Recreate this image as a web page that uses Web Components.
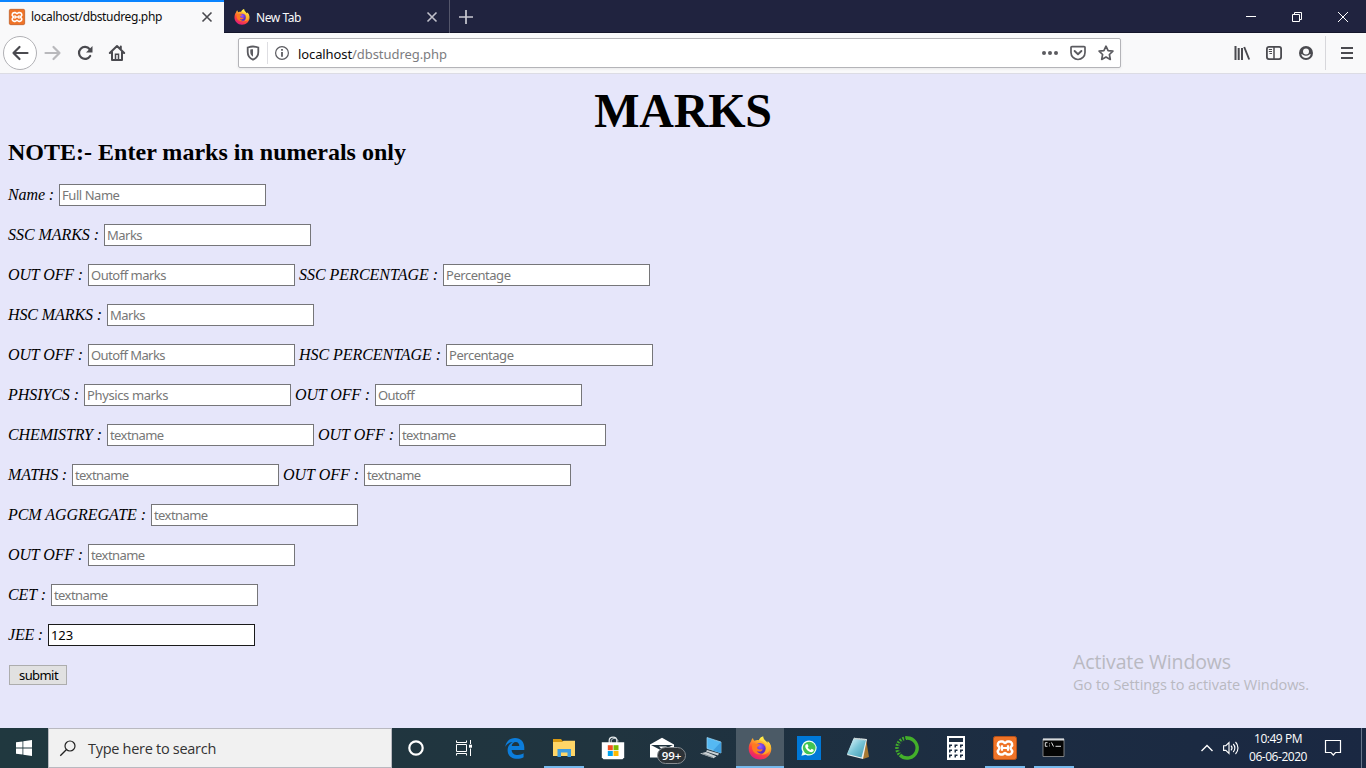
<!DOCTYPE html>
<html lang="en">
<head>
<meta charset="utf-8">
<title>localhost/dbstudreg.php</title>
<style>
html,body{margin:0;height:100%;overflow:hidden}
</style>
</head>
<body>
<desktop-screen></desktop-screen>
<script>
const firefox = `<svg viewBox="0 0 24 24"><defs><linearGradient id="f" x1=".8" y1="0" x2=".25" y2="1"><stop offset="0" stop-color="#fff44f"/><stop offset=".35" stop-color="#ffa828"/><stop offset=".65" stop-color="#ff4838"/><stop offset="1" stop-color="#e01583"/></linearGradient><radialGradient id="p" cx=".5" cy=".3"><stop offset="0" stop-color="#9a5cff"/><stop offset="1" stop-color="#5a2ec4"/></radialGradient><linearGradient id="y" x1="0" y1="0" x2="0" y2="1"><stop offset="0" stop-color="#fff04a"/><stop offset="1" stop-color="#ff9a20"/></linearGradient></defs><path fill="url(#f)" d="M3.200 5c.2-1.400 1-2.500 1.800-3 .1 1.300.7 2.100 1.400 2.800C8 4.100 9.500 4 11 4.200 11.800 2.200 13 1 15.200.5c-.3 2 .8 3.200 2.500 4.500.8.600 1.300 1.300 1.500 2 .5-.4.600-1.200.500-1.800 2.400 2 3.600 4.600 3.600 7.500C23.300 18.900 18.300 23.500 12 23.500S.7 18.800.7 12.700c0-3 .9-5.600 2.500-7.700z"/><path fill="url(#y)" d="M15.200.5c-2.200.5-3.400 1.800-4.200 3.700 4 .4 6.800 3 7.200 6.300.4 4-2 7-5 8.300 5 .1 8.600-2.500 9.400-7 .4-2.500-.8-5-2.900-6.600.1.600 0 1.400-.5 1.800C18 4.500 15 3.500 15.200.5z"/><circle cx="12" cy="12.600" r="5.600" fill="url(#p)"/><path fill="#ff7a20" d="M4 8.200c1.500-1 3.500-.9 4.700-.1 1.300-.2 2.300.3 3.600.5-.3 1.400-2.300 1.700-3 2.300-.3.900.1 1.800 1.200 2.400 1.400.6 2.400-.4 3.600-.1.600.2.500.8 0 1.200-1.500 1.400-3.500 1.500-5.300.6 1.200 2 3.500 3 6 2.600-4.500 2.200-9.600-.1-10.700-5z"/></svg>`;
const xampp = `<svg viewBox="0 0 24 24"><rect x=".5" y=".5" width="23" height="23" rx="2" fill="#ef7327" stroke="#b6521a"/><path d="M7.800 5.500h1.500c1.400 0 1.700 1.500 2.700 1.500s1.300-1.500 2.700-1.500h1.500a3 3 0 0 1 2 5.200c-.9.900-.9 1.700 0 2.600a3 3 0 0 1-2 5.200h-1.500c-1.400 0-1.700-1.500-2.700-1.500s-1.300 1.500-2.700 1.500H7.800a3 3 0 0 1-2-5.200c.9-.9.9-1.700 0-2.600a3 3 0 0 1 2-5.200z" fill="none" stroke="#fff" stroke-width="2.500"/><path d="M9 9.200v5.600M15 9.200v5.600M9 12h6" stroke="#fff" stroke-width="2.200"/></svg>`;
const ICONS = {
firefox, xampp,
close:`<svg viewBox="0 0 12 12"><path d="M1.500 1.500l9 9M10.500 1.500l-9 9" stroke="currentColor" stroke-width="1.600"/></svg>`,
plus:`<svg viewBox="0 0 14 14"><path d="M7 0v14M0 7h14" stroke="currentColor" stroke-width="1.700"/></svg>`,
min:`<svg viewBox="0 0 12 12"><path d="M1 5.500h10" stroke="#fff"/></svg>`,
restore:`<svg viewBox="0 0 12 12"><path d="M1.500 3.500h7v7h-7zM3.500 3.500v-2h7v7h-2" fill="none" stroke="#fff"/></svg>`,
winclose:`<svg viewBox="0 0 12 12"><path d="M1 1l10 10M11 1L1 11" stroke="#fff"/></svg>`,
back:`<svg viewBox="0 0 16 16"><path d="M15.500 8H1.500M7.500 2L1.500 8 7.500 14" fill="none" stroke="currentColor" stroke-width="2.200" stroke-linejoin="round" stroke-linecap="round"/></svg>`,
forward:`<svg viewBox="0 0 16 16"><path d="M.5 8h14M8.500 2L14.500 8 8.500 14" fill="none" stroke="currentColor" stroke-width="2.200" stroke-linejoin="round" stroke-linecap="round"/></svg>`,
reload:`<svg viewBox="0 0 16 16"><path d="M12.700 4.200A6 6 0 1 0 13.200 11" fill="none" stroke="currentColor" stroke-width="2.200" stroke-linecap="round"/><path d="M15.500 1v6.500H9z" fill="currentColor"/></svg>`,
home:`<svg viewBox="0 0 16 16"><path d="M.8 8L8 1l7.200 7M3 7v8h10V7M11.800 1.500v3" fill="none" stroke="currentColor" stroke-width="2" stroke-linecap="round" stroke-linejoin="round"/><path d="M6.500 15V9.300h3V15" stroke="currentColor" fill="none" stroke-width="1.500"/></svg>`,
shield:`<svg viewBox="0 0 16 16"><path d="M8 1.500c1.700 0 3.400.4 5.300 1V7c0 4-2 6.300-5.300 7.700C4.700 13.300 2.700 11 2.700 7V2.500c1.900-.6 3.600-1 5.300-1z" fill="none" stroke="currentColor" stroke-width="1.800"/><path d="M8 4.200c-1 0-1.900.2-2.700.4V7c0 2.300.9 3.700 2.700 4.700z" fill="currentColor"/></svg>`,
info:`<svg viewBox="0 0 16 16"><circle cx="8" cy="8" r="6.400" fill="none" stroke="currentColor" stroke-width="1.200"/><path d="M8 7v4.800M8 4v1.700" stroke="currentColor" stroke-width="1.800"/></svg>`,
dots:`<svg viewBox="0 0 16 16"><g fill="currentColor"><circle cx="2" cy="8" r="2"/><circle cx="8" cy="8" r="2"/><circle cx="14" cy="8" r="2"/></g></svg>`,
pocket:`<svg viewBox="0 0 16 16"><path d="M2 1.600h12a1 1 0 0 1 1 1V7.500a7 7 0 0 1-14 0V2.600a1 1 0 0 1 1-1z" fill="none" stroke="currentColor" stroke-width="1.700"/><path d="M4.600 6L8 9.300 11.400 6" fill="none" stroke="currentColor" stroke-width="1.900" stroke-linecap="round" stroke-linejoin="round"/></svg>`,
star:`<svg viewBox="0 0 16 16"><path d="M8 1.200l2.100 4.400 4.800.6-3.500 3.300.9 4.900L8 12l-4.300 2.400.9-4.900L1.100 6.200l4.800-.6z" fill="none" stroke="currentColor" stroke-width="1.700" stroke-linejoin="round"/></svg>`,
library:`<svg viewBox="0 0 16 16"><path d="M1.500 1v14M4.700 3v12M8 3v12" stroke="currentColor" stroke-width="2"/><path d="M10.200 2l5 12.500" stroke="currentColor" stroke-width="1.900"/></svg>`,
sidebar:`<svg viewBox="0 0 16 16"><rect x=".9" y="1.900" width="14.200" height="12.200" rx="2" fill="none" stroke="currentColor" stroke-width="1.800"/><path d="M8 2v12" stroke="currentColor" stroke-width="1.500"/><path d="M2.800 4.500H6M2.800 6.500H6M3.500 8.500H6" stroke="currentColor"/></svg>`,
account:`<svg viewBox="0 0 16 16"><circle cx="8" cy="8" r="7" fill="currentColor"/><circle cx="8" cy="6.400" r="3" fill="#f9f9fa"/><path d="M3.300 9c1.400.2 1.900 1.700 4.700 1.700S11.300 9.200 12.700 9c-.4 2.500-2.200 4-4.700 4s-4.300-1.500-4.700-4z" fill="#f9f9fa"/></svg>`,
menu:`<svg viewBox="0 0 16 16"><path d="M2 3h12M2 8h12M2 13h12" stroke="currentColor" stroke-width="1.900"/></svg>`,
windows:`<svg viewBox="0 0 16 16"><path fill="#fff" d="M0 2.300l6.500-.9v6.200H0zM7.300 1.300L16 0v7.600H7.300zM0 8.400h6.500v6.200L0 13.700zM7.300 8.400H16V16l-8.700-1.300z"/></svg>`,
search:`<svg viewBox="0 0 16 16"><circle cx="10" cy="6" r="5" fill="none" stroke="#222" stroke-width="1.200"/><path d="M6.500 9.500L.3 15.700" stroke="#222" stroke-width="1.300"/></svg>`,
cortana:`<svg viewBox="0 0 16 16"><circle cx="8" cy="8" r="6.700" fill="none" stroke="#fff" stroke-width="2.200"/></svg>`,
taskview:`<svg viewBox="0 0 16 16"><path d="M.5.500v2h10v-2M.5 15.500v-2h10v2M.5 4.500h10v7H.5zM14.500 0v4M14.500 8.500V16" fill="none" stroke="#fff"/><rect x="13" y="4.700" width="3" height="3" fill="#fff"/></svg>`,
edge:`<svg viewBox="0 0 24 24"><path fill="#0c7ddb" d="M2.200 11C3.200 4.900 7.200 2 12.100 2c6 0 9.200 4.400 9.200 9.600v2.300H8.600c.3 3.500 3.100 5.100 6.200 5.100 2.100 0 4.100-.6 5.800-1.700v4c-1.900 1-4.100 1.500-6.300 1.500-5.900 0-9.700-3.300-9.700-8.600 0-3.600 2.100-6.700 5.300-8.200C5.600 6.500 3.400 8.300 2.200 11zm6.500-1h7.600c0-2.300-1.200-4.100-3.500-4.100-2.200 0-3.800 1.800-4.100 4.100z"/></svg>`,
folder:`<svg viewBox="0 0 24 24"><path fill="#d99a13" d="M1 3h8l2 2.500h11.500V19H1z"/><path fill="#ffd667" d="M1 6h9l1.500-1.300H23V20H1z"/><path fill="#3e9de0" d="M5.500 13H19v8h-3.500v-4.500H9V21H5.500z"/></svg>`,
store:`<svg viewBox="0 0 24 24"><path d="M8.200 7V4.500C8.200 0 15.800 0 15.800 4.500V7" fill="none" stroke="#e8edef" stroke-width="1.200"/><path d="M10.200 7V5C10.200 1.500 17 1.500 17 5.500" fill="none" stroke="#c8d0d4"/><path fill="#fff" d="M.8 6.300h22.400v15.300l-1.700 1.700h-19L.8 21.600z"/><path fill="#f25022" d="M6.800 9.200h5v5h-5z"/><path fill="#7fba00" d="M12.500 9.200h5v5h-5z"/><path fill="#00a4ef" d="M6.800 15h5v5h-5z"/><path fill="#ffb900" d="M12.500 15h5v5h-5z"/></svg>`,
mail:`<svg viewBox="0 0 24 24"><path fill="#fff" d="M0 8.500L12 1.800l12 6.700V21.500H0z"/><path fill="#20343f" d="M1 9h22l-11 5.800z"/><path fill="#fff" d="M9 10.500h8l-5 3z"/></svg>`,
computer:`<svg viewBox="0 0 24 24"><path fill="#55b9f3" stroke="#9ed8f6" stroke-width=".7" d="M8 1.500l14 4.500v11L8 12.500z"/><path fill="#3f9fe0" d="M22 6v11l-8-2.600z"/><path fill="#cbd1d4" d="M8 14l12 3.500-1 2L7 15.500zM7 16l10.500 4.300-3 2L1 17.500z"/><path d="M3 17.500l11 4" stroke="#687780" stroke-width=".7"/></svg>`,
whatsapp:`<svg viewBox="0 0 24 24"><path fill="#0078d7" d="M0 0h24v24H0z"/><path fill="#f0fff1" d="M12.200 4.500a7.500 7.500 0 1 1-3.500 14.200l-4.300 1.100 1.200-4A7.500 7.500 0 0 1 12.200 4.500z"/><circle cx="12.200" cy="12" r="6.300" fill="#41c452"/><path fill="#fff" d="M9.300 8.300h1.400l.8 2-.8 1.100c.7 1.300 1.500 2 2.800 2.500l1.100-1.200 2 1v1.400c-1 1.400-2.700 1.300-4.500.3-2.200-1.200-3.900-3.400-3.900-5.200 0-.8.4-1.500 1.100-1.900z"/></svg>`,
notepad:`<svg viewBox="0 0 24 24"><defs><linearGradient id="n" x2="1" y2="1"><stop stop-color="#e8fbff"/><stop offset=".5" stop-color="#78c4d6"/><stop offset="1" stop-color="#3a97b0"/></linearGradient></defs><path fill="#a77832" d="M20 3l3 18-6 2-2-5z"/><path fill="#edf0ef" d="M8 2l13 1-4 20-16-4z"/><path fill="url(#n)" d="M7.500 2.500L20 4l-4.500 17.500L1 18z"/><path d="M8 2.500l13 1.500" stroke="#c5d0d2" stroke-width="1.800" stroke-dasharray="1 .7"/></svg>`,
anaconda:`<svg viewBox="0 0 24 24"><path d="M12 2A10 10 0 1 1 5 19" fill="none" stroke="#43b02a" stroke-width="3.400"/><path d="M12 2A10 10 0 0 0 5 19" fill="none" stroke="#43b02a" stroke-width="3.800" stroke-dasharray="1.700 1.200"/><path d="M11 3.500A8.500 8.500 0 0 0 5.500 17.500" fill="none" stroke="#1e2f40" stroke-width=".9" stroke-dasharray="2 1.200"/></svg>`,
calc:`<svg viewBox="0 0 24 24"><path fill="#fff" d="M3 0h18v24H3z"/><path fill="#1d2d40" d="M5 2h14v4H5zM5 8.500h3v1.500H6.500v1.500H5zM10.500 8.500h3v1.500H12v1.500h-1.500zM16 8.500h3v1.500h-1.500v1.500H16zM5 13.500h3V15H6.500v1.500H5zM10.500 13.500h3V15H12v1.500h-1.500zM16 13.500h3V15h-1.500v1.500H16zM5 18.500h3V20H6.500v1.500H5zM10.500 18.500h3V20H12v1.500h-1.500zM16 18.500h3V20h-1.500v1.500H16z"/></svg>`,
cmd:`<svg viewBox="0 0 24 24"><path fill="#050505" stroke="#999" stroke-width=".8" d="M1 3h21v17.500H1z"/><path fill="#d5d9dc" d="M1 2.500h21v2H1z"/><path d="M5.500 6.700H3.300v3.600h2.200M7.500 7.500v.8M7.500 9.500v.8M9.500 6.500l2 4M13.500 10.300H19" fill="none" stroke="#ddd"/></svg>`,
up:`<svg viewBox="0 0 14 14"><path d="M1.500 10L7 4.500l5.500 5.500" fill="none" stroke="#fff" stroke-width="1.400"/></svg>`,
sound:`<svg viewBox="0 0 16 16"><path d="M.6 5.700h2.200L6 2.700v10.600L2.800 10.300H.6zM8 5.700c1.200 1.300 1.200 3.300 0 4.600M10.200 4c2.200 2.200 2.200 5.800 0 8M12.500 2c3.300 3.300 3.300 8.700 0 12" fill="none" stroke="#fff" stroke-width="1.150"/></svg>`,
action:`<svg viewBox="0 0 16 16"><path d="M.5.500h15v12h-5L8.300 15 6 12.500H.5z" fill="none" stroke="#fff" stroke-width="1.200"/></svg>`
};

/* Base class: renders a component's template into an open shadow root. */
class Base extends HTMLElement{
  connectedCallback(){ if(!this.shadowRoot){ this.attachShadow({mode:'open'}).innerHTML=this.render(); } }
}
const a=(el,n,d='')=>el.getAttribute(n)??d;

customElements.define('ui-icon',class extends Base{
  render(){const s=a(this,'size','16');return `<style>:host{display:block;flex:none;width:${s}px;height:${s}px}svg{display:block;width:100%;height:100%;overflow:visible}</style>${ICONS[a(this,'name')]}`}
});

/* Single-line text whose tracking is adjusted to fill the width given in "w". */
customElements.define('track-text',class extends Base{
  render(){return `<style>:host{display:block;flex:none;width:${a(this,'w')}px;white-space:pre}span{display:inline-block}</style><span><slot></slot></span>`}
  connectedCallback(){super.connectedCallback();
    const s=this.shadowRoot.querySelector('span'),n=this.textContent.length,w=+a(this,'w');
    const r=s.getBoundingClientRect().width; if(r) s.style.letterSpacing=((w-r)/n).toFixed(3)+'px';
  }
});

customElements.define('browser-tab',class extends Base{
  render(){return `<style>:host{display:flex;box-sizing:border-box;align-items:center;width:226px;height:33px;padding:1px 11px 0 10px;color:#f9f9fa;border-right:1px solid #54566b;font:12px/16px "Noto Sans","Open Sans",sans-serif}
  :host([active]){width:224px;background:#f9f9fa;color:#0c0c0d;border:0;border-top:2px solid #0a84ff;padding:0 11px 1px 9px}
  track-text{margin-left:6px}:host(:not([active])) track-text{padding-top:2px}.x{margin-left:auto;color:#c0c0ca}:host([active]) .x{color:#4a4a4f}</style>
  <ui-icon name="${a(this,'icon')}" size="16"></ui-icon><track-text w="${a(this,'w')}">${a(this,'label')}</track-text><ui-icon class="x" name="close" size="12"></ui-icon>`}
});

customElements.define('browser-chrome',class extends Base{
  render(){return `<style>:host{display:block;flex:none;height:74px;font-family:"Noto Sans","Open Sans",sans-serif}
  .tabs{display:flex;height:33px;background:#20233f;align-items:center;box-shadow:inset 0 -1px #14162b}
  .plus{margin-left:9px;color:#c9c9d2}.win{margin-left:auto;display:flex;gap:34px;padding-right:17px}
  .bar{display:flex;box-sizing:border-box;height:41px;background:#f9f9fa;border-bottom:1px solid #dcdce4;align-items:center;color:#4a4a4f;padding-left:3px}
  .back{box-sizing:border-box;width:34px;height:34px;border:1px solid #b1b1b5;border-radius:50%;background:#fff;display:grid;place-items:center}
  .fw{color:#b9b9bc;margin-left:8px}.re,.ho{margin-left:16px}
  .url{box-sizing:border-box;width:883px;height:30px;margin-left:113px;background:#fff;border:1px solid #b4b4b8;border-radius:2px;box-shadow:0 1px 3px #0001;display:flex;align-items:center;padding:0 6px;color:#5b5b60;font-size:13px;line-height:18px}
  .sep{width:1px;height:22px;background:#dedee2;margin:0 6px}
  .host{color:#0c0c0d;margin-left:8px}.path{color:#7c7c80}.host,.path{padding-top:2px}
  .r{margin-left:auto;display:flex;gap:12px}
  .tools{margin-left:113px;display:flex;gap:16px}.vs{width:1px;height:34px;background:#d7d7db;margin:0 13px 0 11px}
  </style>
  <div class="tabs"><browser-tab active icon="xampp" label="localhost/dbstudreg.php" w="131"></browser-tab><browser-tab icon="firefox" label="New Tab" w="45"></browser-tab><ui-icon class="plus" name="plus" size="14"></ui-icon>
   <div class="win"><ui-icon name="min" size="12"></ui-icon><ui-icon name="restore" size="12"></ui-icon><ui-icon name="winclose" size="12"></ui-icon></div></div>
  <div class="bar"><div class="back"><ui-icon name="back"></ui-icon></div><ui-icon class="fw" name="forward"></ui-icon><ui-icon class="re" name="reload"></ui-icon><ui-icon class="ho" name="home"></ui-icon>
   <div class="url"><ui-icon name="shield"></ui-icon><i class="sep"></i><ui-icon name="info"></ui-icon><track-text class="host" w="54">localhost</track-text><track-text class="path" w="95">/dbstudreg.php</track-text>
    <div class="r"><ui-icon name="dots"></ui-icon><ui-icon name="pocket"></ui-icon><ui-icon name="star"></ui-icon></div></div>
   <div class="tools"><ui-icon name="library"></ui-icon><ui-icon name="sidebar"></ui-icon><ui-icon name="account"></ui-icon></div><i class="vs"></i><ui-icon name="menu"></ui-icon></div>`}
});

customElements.define('form-field',class extends Base{
  render(){return `<style>:host{display:flex;flex:none;height:22px;align-items:flex-start}
  .l{font:italic 16px/22px "Liberation Serif",serif;color:#000;margin-right:5px}
  .b{box-sizing:border-box;width:207px;height:22px;border:1px solid #767679;background:#fff;padding:0 2px;font:13px/20px "Noto Sans","Open Sans",sans-serif;color:#777}
  :host([filled]) .b{border-color:#1a1a1a;color:#000}</style>
  <track-text class="l" w="${a(this,'lw')-1}">${a(this,'label')}</track-text><div class="b"><track-text w="${a(this,'tw')}">${a(this,'text')}</track-text></div>`}
});

const ROWS=[
 [['Name :',47,'Full Name',57.5]],
 [['SSC MARKS :',92,'Marks',35]],
 [['OUT OFF :',76,'Outoff marks',75],['SSC PERCENTAGE :',140,'Percentage',64.5]],
 [['HSC MARKS :',95,'Marks',35]],
 [['OUT OFF :',76,'Outoff Marks',74],['HSC PERCENTAGE :',143,'Percentage',64.5]],
 [['PHSIYCS :',72,'Physics marks',81],['OUT OFF :',76,'Outoff',36]],
 [['CHEMISTRY :',95,'textname',53.5],['OUT OFF :',77,'textname',53.5]],
 [['MATHS :',60,'textname',53.5],['OUT OFF :',77,'textname',53.5]],
 [['PCM AGGREGATE :',139,'textname',53.5]],
 [['OUT OFF :',76,'textname',53.5]],
 [['CET :',39,'textname',53.5]],
 [['JEE :',36,'123',22,1]]
];
customElements.define('marks-page',class extends Base{
  render(){return `<style>:host{display:block;box-sizing:border-box;flex:1;background:#e6e6fa;padding:9px 8px 0;font-family:"Liberation Serif",serif;color:#000}
  h1{margin:0;font-size:48px;line-height:55px;text-align:center;letter-spacing:-.2px}h2{margin:0;font-size:24px;line-height:28px}
  .rows{display:flex;flex-direction:column;gap:18px;margin-top:18px}.row{display:flex;gap:4px}
  button{display:block;box-sizing:border-box;width:58px;height:20px;margin:19px 0 0 1px;padding:0 0 0 9px;border:1px solid #adadad;background:#e1e1e1;color:#000;text-align:left;font:13px/18px "Noto Sans","Open Sans",sans-serif}</style>
  <h1>MARKS</h1><h2><track-text w="398">NOTE:- Enter marks in numerals only</track-text></h2>
  <div class="rows">${ROWS.map(r=>`<div class="row">${r.map(f=>`<form-field label="${f[0]}" lw="${f[1]}" text="${f[2]}" tw="${f[3]}" ${f[4]?'filled':''}></form-field>`).join('')}</div>`).join('')}</div>
  <button><track-text w="39">submit</track-text></button>`}
});

customElements.define('activate-notice',class extends Base{
  render(){return `<style>:host{display:block;position:absolute;left:1073px;top:649px;color:#b9b9c1;font-family:"Open Sans","Noto Sans",sans-serif}.t{font-size:19.500px;line-height:25px}.s{font-size:14.500px;line-height:20px;padding-top:1px}</style>
  <track-text class="t" w="158">Activate Windows</track-text><track-text class="s" w="236">Go to Settings to activate Windows.</track-text>`}
});

customElements.define('task-button',class extends Base{
  render(){const n=a(this,'name');return `<style>:host{display:grid;position:relative;place-items:center;flex:none;width:48px;height:40px}
  :host([state=focus]){background:#4b5a66;box-shadow:inset 0 -2px #76b9ed}
  :host([state=open])::after{content:"";position:absolute;left:4px;right:4px;bottom:0;height:2px;background:#76b9ed}
  .badge{position:absolute;left:19px;top:19px;box-sizing:border-box;width:29px;height:17px;border:1px solid #858b90;border-radius:9px;background:#2d3338;color:#fff;font:600 11.500px/15px "Open Sans",sans-serif;text-align:center}</style>
  <ui-icon name="${n}" size="${a(this,'size','24')}"></ui-icon>${this.hasAttribute('badge')?`<span class="badge">${a(this,'badge')}</span>`:''}`}
});

customElements.define('task-bar',class extends Base{
  render(){return `<style>:host{display:flex;flex:none;height:40px;background:linear-gradient(90deg,#20383f,#20343f 45%,#1c2c42 75%,#1a2842);color:#fff;font-family:"Open Sans","Noto Sans",sans-serif}
  .search{box-sizing:border-box;width:344px;height:40px;background:#f1f1f1;border:1px solid #b9b9c0;display:flex;align-items:center;padding-left:11px;color:#333;font-size:14.500px;line-height:20px}
  .search track-text{margin-left:12px;padding-top:1px}
  .apps{display:flex;gap:1px;margin-left:3px}
  .tray{margin-left:auto;display:flex;align-items:center}
  .clock{width:58px;margin:0 18px 0 10px;font-size:12px;line-height:18px}.clock track-text:first-child{margin-left:5px}
  .end{width:1px;height:40px;background:#68758a;margin:0 4px 0 20px}</style>
  <task-button name="windows" size="16"></task-button>
  <div class="search"><ui-icon name="search"></ui-icon><track-text w="128">Type here to search</track-text></div>
  <task-button name="cortana" size="16"></task-button><task-button name="taskview" size="16"></task-button>
  <div class="apps"><task-button name="edge"></task-button><task-button name="folder" state="open"></task-button><task-button name="store"></task-button><task-button name="mail" badge="99+"></task-button><task-button name="computer"></task-button><task-button name="firefox" state="focus"></task-button><task-button name="whatsapp"></task-button><task-button name="notepad"></task-button><task-button name="anaconda"></task-button><task-button name="calc"></task-button><task-button name="xampp" state="open"></task-button><task-button name="cmd" state="open"></task-button></div>
  <div class="tray"><ui-icon name="up" size="14" style="margin-right:9px"></ui-icon><ui-icon name="sound"></ui-icon><div class="clock"><track-text w="48">10:49 PM</track-text><track-text w="58">06-06-2020</track-text></div><ui-icon name="action"></ui-icon><i class="end"></i></div>`}
});

customElements.define('desktop-screen',class extends Base{
  render(){return `<style>:host{display:flex;flex-direction:column;position:relative;width:1366px;height:768px;overflow:hidden}</style><browser-chrome></browser-chrome><marks-page></marks-page><activate-notice></activate-notice><task-bar></task-bar>`}
});
</script>
</body>
</html>
